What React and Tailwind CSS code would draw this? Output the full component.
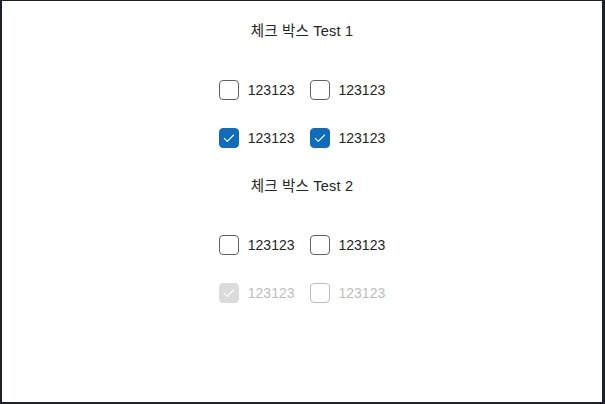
import React from "react";

const Check = ({ checked, disabled, label }) => {
  let box = "border border-[#616161] bg-white";
  if (checked && !disabled) box = "bg-[#0f6cbd] border border-[#0f6cbd]";
  if (checked && disabled) box = "bg-[#dbdbdb] border border-[#dbdbdb]";
  if (!checked && disabled) box = "border border-[#bdbdbd] bg-white";

  return (
    <label className="flex items-center h-5">
      <span className={`w-5 h-5 rounded-[4px] flex items-center justify-center ${box}`}>
        {checked && (
          <svg width="14" height="14" viewBox="0 0 14 14" fill="none">
            <path
              d="M2.3 7.4 L5.3 10.3 L11.6 4"
              stroke="white"
              strokeWidth="1.1"
              strokeLinecap="round"
              strokeLinejoin="round"
            />
          </svg>
        )}
      </span>
      <span
        className={`ml-[9px] text-[14px] leading-5 ${
          disabled ? "text-[#bdbdbd]" : "text-[#242424]"
        }`}
      >
        {label}
      </span>
    </label>
  );
};

const Row = ({ items }) => (
  <div className="flex items-center gap-[15px]">
    {items.map((it, i) => (
      <Check key={i} {...it} />
    ))}
  </div>
);

export default function App() {
  return (
    <div className="w-[605px] h-[404px] bg-[#1d2029] pt-px pl-[2px] pr-[3px] pb-[2px]">
      <div
        className="w-full h-full bg-white flex flex-col items-center pt-[20px]"
        style={{ fontFamily: '"Liberation Sans", "Noto Sans CJK KR", sans-serif' }}
      >
        <div className="text-[14.5px] leading-5 text-[#242424] tracking-[0.2px]">체크 박스 Test 1</div>
        <div className="mt-[39px]">
          <Row items={[{ label: "123123" }, { label: "123123" }]} />
        </div>
        <div className="mt-[28px]">
          <Row items={[{ label: "123123", checked: true }, { label: "123123", checked: true }]} />
        </div>
        <div className="mt-[28px] text-[14.5px] leading-5 text-[#242424] tracking-[0.2px]">체크 박스 Test 2</div>
        <div className="mt-[39px]">
          <Row items={[{ label: "123123" }, { label: "123123" }]} />
        </div>
        <div className="mt-[28px]">
          <Row
            items={[
              { label: "123123", checked: true, disabled: true },
              { label: "123123", disabled: true },
            ]}
          />
        </div>
      </div>
    </div>
  );
}
